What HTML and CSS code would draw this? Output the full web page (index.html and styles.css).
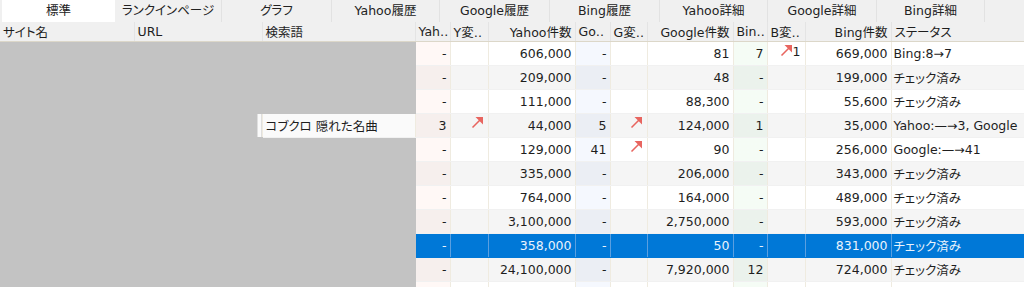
FILE: index.html
```html
<!DOCTYPE html>
<html lang="ja">
<head>
  <meta charset="UTF-8" />
  <title>順位チェック</title>
  <link rel="stylesheet" href="styles.css">
</head>
<body>
  <div class="tabs">
    <div class="tab active">標準</div>
    <div class="tab w107">ランクインページ</div>
    <div class="tab w110">グラフ</div>
    <div class="tab w108">Yahoo履歴</div>
    <div class="tab w110">Google履歴</div>
    <div class="tab w110">Bing履歴</div>
    <div class="tab w108">Yahoo詳細</div>
    <div class="tab w109">Google詳細</div>
    <div class="tab w108">Bing詳細</div>
  </div>

  <div class="view">
    <table class="grid">
      <colgroup>
        <col class="c-site"><col class="c-url"><col class="c-word">
        <col class="c-rank"><col class="c-chg"><col class="c-num">
        <col class="c-rank"><col class="c-chg2"><col class="c-num2">
        <col class="c-rank2"><col class="c-chg"><col class="c-num2">
        <col class="c-status">
      </colgroup>
      <thead>
        <tr>
          <th>サイト名</th><th>URL</th><th>検索語</th>
          <th>Yah‥</th><th>Y変‥</th><th class="r">Yahoo件数</th>
          <th>Go‥</th><th>G変‥</th><th class="r">Google件数</th>
          <th>Bin‥</th><th>B変‥</th><th class="r">Bing件数</th>
          <th>ステータス</th>
        </tr>
      </thead>
      <tbody id="rows"></tbody>
    </table>
  </div>

  <svg width="0" height="0" class="defs">
    <symbol id="up" viewBox="0 0 13 13">
      <line x1="1.5" y1="11.5" x2="9.5" y2="3.5" stroke="#e8655f" stroke-width="1.6"/>
      <polygon points="4.5,1 12,1 12,8.5" fill="#e8655f"/>
    </symbol>
  </svg>

  <script>
    // 表示データ（左側3列はマスク）
    const data = [
      { y: "-", yc: "", yn: "606,000", g: "-", gc: "", gn: "81", b: "7", bc: "1", bn: "669,000", st: "Bing:8→7" },
      { y: "-", yc: "", yn: "209,000", g: "-", gc: "", gn: "48", b: "-", bc: "", bn: "199,000", st: "チェック済み" },
      { y: "-", yc: "", yn: "111,000", g: "-", gc: "", gn: "88,300", b: "-", bc: "", bn: "55,600", st: "チェック済み" },
      { word: "コブクロ 隠れた名曲", y: "3", yc: "up", yn: "44,000", g: "5", gc: "up", gn: "124,000", b: "1", bc: "", bn: "35,000", st: "Yahoo:—→3, Google" },
      { y: "-", yc: "", yn: "129,000", g: "41", gc: "up", gn: "90", b: "-", bc: "", bn: "256,000", st: "Google:—→41" },
      { y: "-", yc: "", yn: "335,000", g: "-", gc: "", gn: "206,000", b: "-", bc: "", bn: "343,000", st: "チェック済み" },
      { y: "-", yc: "", yn: "764,000", g: "-", gc: "", gn: "164,000", b: "-", bc: "", bn: "489,000", st: "チェック済み" },
      { y: "-", yc: "", yn: "3,100,000", g: "-", gc: "", gn: "2,750,000", b: "-", bc: "", bn: "593,000", st: "チェック済み" },
      { sel: true, y: "-", yc: "", yn: "358,000", g: "-", gc: "", gn: "50", b: "-", bc: "", bn: "831,000", st: "チェック済み" },
      { y: "-", yc: "", yn: "24,100,000", g: "-", gc: "", gn: "7,920,000", b: "12", bc: "", bn: "724,000", st: "チェック済み" },
      { y: "", yc: "", yn: "", g: "", gc: "", gn: "", b: "", bc: "", bn: "", st: "" }
    ];

    const arrow = '<svg class="arrow"><use href="#up"/></svg>';
    function change(v) {
      if (v === "up") return arrow;
      if (v) return arrow + v;
      return "";
    }

    const tbody = document.getElementById("rows");
    data.forEach((d, i) => {
      const tr = document.createElement("tr");
      if (i % 2 === 1) tr.className = "alt";
      if (d.sel) tr.className = "sel";
      let left;
      if (d.word) {
        left = '<td class="mask"></td><td class="mask-part"></td><td class="word">' + d.word + '</td>';
      } else {
        left = '<td class="mask"></td><td class="mask"></td><td class="mask"></td>';
      }
      tr.innerHTML = left +
        '<td class="r tint-y">' + d.y + '</td>' +
        '<td class="r chg">' + change(d.yc) + '</td>' +
        '<td class="r">' + d.yn + '</td>' +
        '<td class="r tint-g">' + d.g + '</td>' +
        '<td class="r chg">' + change(d.gc) + '</td>' +
        '<td class="r">' + d.gn + '</td>' +
        '<td class="r tint-b">' + d.b + '</td>' +
        '<td class="r chg">' + change(d.bc) + '</td>' +
        '<td class="r">' + d.bn + '</td>' +
        '<td class="status">' + d.st + '</td>';
      tbody.appendChild(tr);
    });
  </script>
</body>
</html>
```
FILE: styles.css
```css
body {
  margin: 0;
  background: #fff;
  font-family: "DejaVu Sans", "Noto Sans CJK JP", sans-serif;
  font-size: 12.5px;
  font-feature-settings: "palt";
  color: #1e1e1e;
  overflow: hidden;
}

.defs {
  position: absolute;
}

/* タブ */
.tabs {
  display: flex;
  height: 22px;
  padding-left: 2px;
  background: #f0f0f0;
}

.tab {
  width: 110px;
  box-sizing: border-box;
  border-right: 1px solid #e2e2e2;
  text-align: center;
  line-height: 21px;
  color: #222;
}

.tab.active {
  width: 113px;
  background: #fff;
  border-right: none;
}

.tab.w107 { width: 107px; }
.tab.w108 { width: 108px; }
.tab.w109 { width: 109px; }
.tab.w110 { width: 110px; }

/* 一覧 */
.view {
  height: 265px;
  overflow: hidden;
}

.grid {
  border-collapse: collapse;
  table-layout: fixed;
  width: 1024px;
}

.c-site { width: 134px; }
.c-url { width: 128px; }
.c-word { width: 153px; }
.c-rank { width: 35px; }
.c-rank2 { width: 34px; }
.c-chg { width: 38px; }
.c-chg2 { width: 37px; }
.c-num { width: 87px; }
.c-num2 { width: 86px; }
.c-status { width: 133px; }

.grid th {
  height: 19px;
  padding: 0 3px;
  background: #f0f0f0;
  border-right: 1px solid #e4e4e4;
  border-bottom: 1px solid #dcd7c9;
  font-weight: normal;
  text-align: left;
  white-space: nowrap;
  overflow: hidden;
}

.grid th.r {
  text-align: right;
}

.grid td {
  height: 23px;
  padding: 0 3px;
  border-right: 1px solid #efebe0;
  border-bottom: 1px solid #f1f1f1;
  white-space: nowrap;
  overflow: hidden;
}

.grid td.r {
  text-align: right;
}

.grid td.chg {
  padding-right: 4px;
  vertical-align: top;
  padding-top: 2px;
  height: 21px;
}

.arrow {
  width: 13px;
  height: 13px;
  vertical-align: -1px;
}

.grid tr.alt td {
  background-color: #f5f5f5;
}

.grid td.tint-y {
  background-image: linear-gradient(rgba(255, 120, 80, 0.05), rgba(255, 120, 80, 0.05));
}

.grid td.tint-g {
  background-image: linear-gradient(rgba(80, 130, 230, 0.06), rgba(80, 130, 230, 0.06));
}

.grid td.tint-b {
  background-image: linear-gradient(rgba(80, 200, 90, 0.06), rgba(80, 200, 90, 0.06));
}

.grid td.mask {
  background: #c3c3c3;
  border-color: #c3c3c3;
}

.grid tr.alt td.mask {
  background: #c3c3c3;
}

.grid td.mask-part {
  background: linear-gradient(to right, #c3c3c3 123px, #fafafa 123px);
  border-bottom-color: #c3c3c3;
}

.grid tr.alt td.mask-part {
  background: linear-gradient(to right, #c3c3c3 123px, #fafafa 123px);
}

.grid td.word {
  padding-left: 3px;
  background-color: #fafafa;
}

.grid tr.alt td.word {
  background-color: #fafafa;
}

.grid td.status {
  padding-left: 2px;
  padding-right: 0;
  border-right: none;
}

.grid tr.sel td {
  background: #0078d7;
  color: #eaf3fc;
  border-right-color: #5a9fe0;
  border-bottom-color: #0078d7;
}

.grid tr.sel td.mask {
  background: #c3c3c3;
  border-color: #c3c3c3;
}
```
